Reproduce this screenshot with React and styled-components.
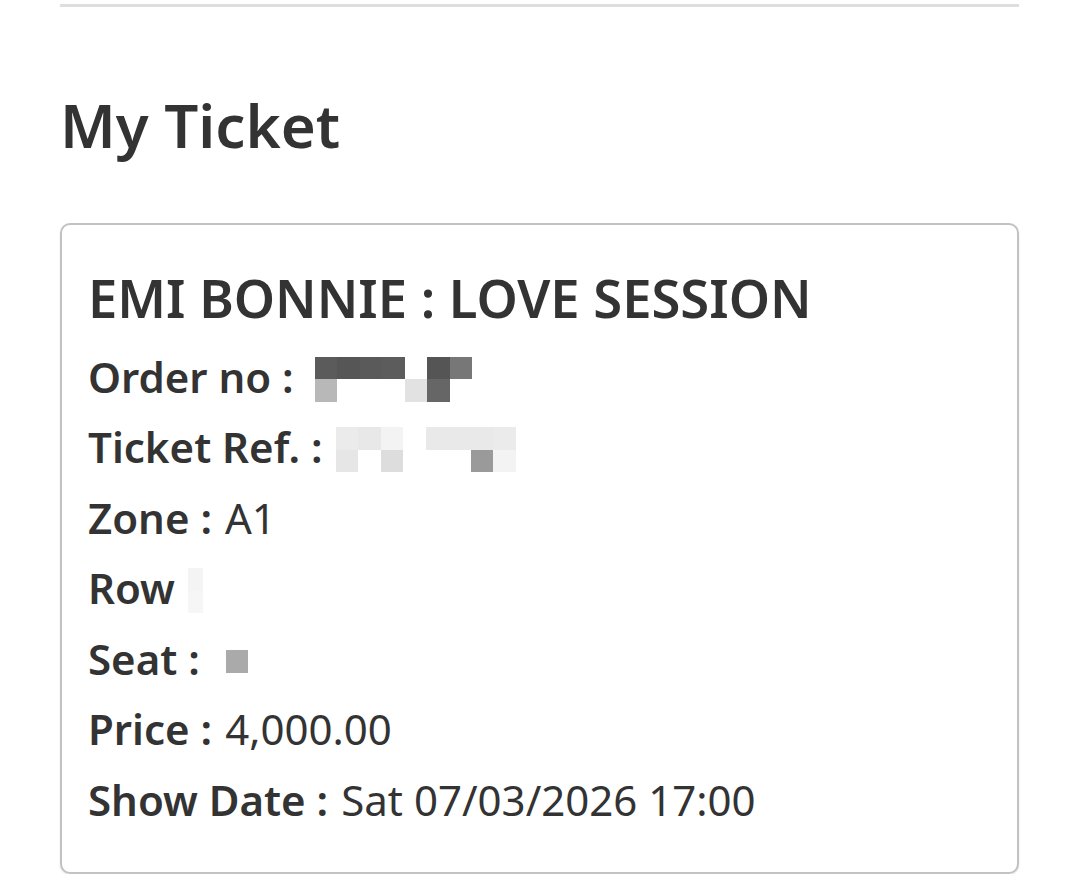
import React from "react";
import styled, { createGlobalStyle } from "styled-components";

const GlobalStyle = createGlobalStyle`
  body {
    margin: 0;
    background: #ffffff;
    font-family: "Noto Sans", "Open Sans", sans-serif;
    color: #333333;
  }
`;

const Page = styled.div`
  padding: 4px 58px 0 60px;
`;

const Divider = styled.div`
  height: 3px;
  background: #dedede;
`;

const Heading = styled.h1`
  margin: 78px 0 0 0;
  font-size: 60px;
  font-weight: 600;
  line-height: 80px;
`;

const Card = styled.div`
  margin-top: 58px;
  border: 2px solid #c2c2c2;
  border-radius: 10px;
  box-shadow: 0 1px 2px rgba(0, 0, 0, 0.12);
  padding: 38px 26px 37px 26px;
`;

const EventTitle = styled.h2`
  margin: 0 0 8px 0;
  font-size: 52.5px;
  font-weight: 600;
  line-height: 70px;
`;

const Line = styled.div`
  display: flex;
  align-items: center;
  height: 70.5px;
  font-size: 42px;
  white-space: nowrap;
`;

const Label = styled.span`
  font-weight: 600;
  margin-right: 13px;
`;

const Value = styled.span`
  font-weight: 400;
`;

const Blur = styled.div`
  display: grid;
  grid-template-columns: repeat(${(p) => p.$cols}, ${(p) => p.$size || 22.5}px);
  grid-auto-rows: 22.5px;
  margin-top: 6px;
  margin-left: ${(p) => p.$offset || 0}px;
`;

const Cell = styled.div`
  background: ${(p) => p.$shade};
`;

const orderCells = [
  "#5b5b5b", "#565656", "#5a5a5a", "#5c5c5c", "#ffffff", "#555555", "#777777",
  "#b8b8b8", "#ffffff", "#ffffff", "#ffffff", "#e2e2e2", "#666666", "#ffffff",
];

const refCells = [
  "#ebebeb", "#e8e8e8", "#f3f3f3", "#ffffff", "#e9e9e9", "#e9e9e9", "#e9e9e9", "#ebebeb", "#ffffff",
  "#e6e6e6", "#ffffff", "#dddddd", "#ffffff", "#ffffff", "#ffffff", "#9a9a9a", "#f3f3f3", "#ffffff",
];

const rowCells = ["#f4f4f4", "#f6f6f6"];
const seatCells = ["#aaaaaa"];

function Redacted({ cells, cols, offset, size }) {
  return (
    <Blur $cols={cols} $offset={offset} $size={size}>
      {cells.map((c, i) => (
        <Cell key={i} $shade={c} />
      ))}
    </Blur>
  );
}

export default function App() {
  return (
    <>
      <GlobalStyle />
      <Page>
        <Divider />
        <Heading>My Ticket</Heading>
        <Card>
          <EventTitle>EMI BONNIE : LOVE SESSION</EventTitle>
          <Line>
            <Label>Order no :</Label>
            <Redacted cells={orderCells} cols={7} offset={8} />
          </Line>
          <Line>
            <Label>Ticket Ref. :</Label>
            <Redacted cells={refCells} cols={9} />
          </Line>
          <Line>
            <Label>Zone :</Label>
            <Value>A1</Value>
          </Line>
          <Line>
            <Label>Row</Label>
            <Redacted cells={rowCells} cols={1} size={15} />
          </Line>
          <Line>
            <Label>Seat :</Label>
            <Redacted cells={seatCells} cols={1} offset={13} size={22} />
          </Line>
          <Line>
            <Label>Price :</Label>
            <Value>4,000.00</Value>
          </Line>
          <Line>
            <Label>Show Date :</Label>
            <Value>Sat 07/03/2026 17:00</Value>
          </Line>
        </Card>
      </Page>
    </>
  );
}
